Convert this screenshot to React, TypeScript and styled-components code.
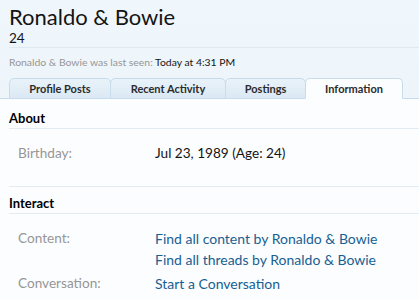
import styled, { createGlobalStyle } from "styled-components";

const GlobalStyle = createGlobalStyle`
  html, body {
    margin: 0;
    padding: 0;
    background: #fcfdfe;
  }
  body {
    font-family: "Lato", "Liberation Sans", sans-serif;
    color: #141414;
  }
`;

const Page = styled.div`
  width: 419px;
  height: 300px;
  overflow: hidden;
  background: #fcfdfe;
`;

const Header = styled.div`
  background: linear-gradient(to bottom, #f0f7fc, #edf4fa);
  padding: 3px 0 0 9px;
  border-bottom: 1px solid #c6dcec;
`;

const Title = styled.h1`
  margin: 0;
  font-size: 22px;
  font-weight: 400;
  line-height: 27px;
  color: #141414;
`;

const SubTitle = styled.div`
  font-size: 13.5px;
  line-height: 16px;
  color: #141414;
  padding-bottom: 1px;
  border-bottom: 1px solid #dfe9f2;
`;

const LastSeen = styled.div`
  font-size: 10.4px;
  line-height: 14px;
  margin-top: 7px;
  color: #969696;

  & > strong {
    font-weight: 400;
    color: #141414;
  }
`;

const Tabs = styled.div`
  display: flex;
  margin-top: 9px;
  height: 21px;
  margin-bottom: -1px;
`;

const Tab = styled.div<{ $width: number; $active?: boolean }>`
  width: ${(p) => p.$width}px;
  box-sizing: border-box;
  display: flex;
  align-items: center;
  justify-content: center;
  font-size: 11px;
  font-weight: 700;
  color: #2b2b2b;
  border: 1px solid #c6dcec;
  border-bottom: ${(p) => (p.$active ? "1px solid #fcfdfe" : "1px solid #c6dcec")};
  border-radius: 5px 5px 0 0;
  background: ${(p) =>
    p.$active ? "#fcfdfe" : "linear-gradient(to bottom, #e9f2f9, #dbe9f4)"};
  margin-right: -1px;
`;

const Body = styled.div`
  padding: 3px 0 0 9px;
`;

const Section = styled.div`
  padding-bottom: 19px;
  border-bottom: 1px solid #e4ecf3;

  &:last-child {
    border-bottom: none;
  }
`;

const SectionTitle = styled.h3`
  margin: 8px 0 0;
  font-size: 13px;
  line-height: 16px;
  font-weight: 700;
  color: #000;
  padding-bottom: 2px;
  border-bottom: 1px solid #e4ecf3;
`;

const Rows = styled.dl`
  margin: 14px 0 0;
`;

const Row = styled.div`
  display: flex;
  margin-bottom: 3px;
  font-size: 13.6px;
  line-height: 21px;
`;

const Label = styled.dt`
  width: 146px;
  padding-left: 9px;
  box-sizing: border-box;
  flex-shrink: 0;
  color: #969696;
`;

const Values = styled.dd`
  margin: 0;
  color: #141414;
`;

const Link = styled.a`
  display: block;
  font-size: 14px;
  color: #176093;
  text-decoration: none;
`;

const tabs = [
  { label: "Profile Posts", width: 102 },
  { label: "Recent Activity", width: 116 },
  { label: "Postings", width: 81 },
  { label: "Information", width: 98, active: true },
];

export default function App() {
  return (
    <Page>
      <GlobalStyle />
      <Header>
        <Title>Ronaldo &amp; Bowie</Title>
        <SubTitle>24</SubTitle>
        <LastSeen>
          Ronaldo &amp; Bowie was last seen: <strong>Today at 4:31 PM</strong>
        </LastSeen>
        <Tabs>
          {tabs.map((t) => (
            <Tab key={t.label} $width={t.width} $active={t.active}>
              {t.label}
            </Tab>
          ))}
        </Tabs>
      </Header>
      <Body>
        <Section>
          <SectionTitle>About</SectionTitle>
          <Rows>
            <Row>
              <Label>Birthday:</Label>
              <Values>Jul 23, 1989 (Age: 24)</Values>
            </Row>
          </Rows>
        </Section>
        <Section>
          <SectionTitle>Interact</SectionTitle>
          <Rows>
            <Row>
              <Label>Content:</Label>
              <Values>
                <Link href="#">Find all content by Ronaldo &amp; Bowie</Link>
                <Link href="#">Find all threads by Ronaldo &amp; Bowie</Link>
              </Values>
            </Row>
            <Row>
              <Label>Conversation:</Label>
              <Values>
                <Link href="#">Start a Conversation</Link>
              </Values>
            </Row>
          </Rows>
        </Section>
      </Body>
    </Page>
  );
}
